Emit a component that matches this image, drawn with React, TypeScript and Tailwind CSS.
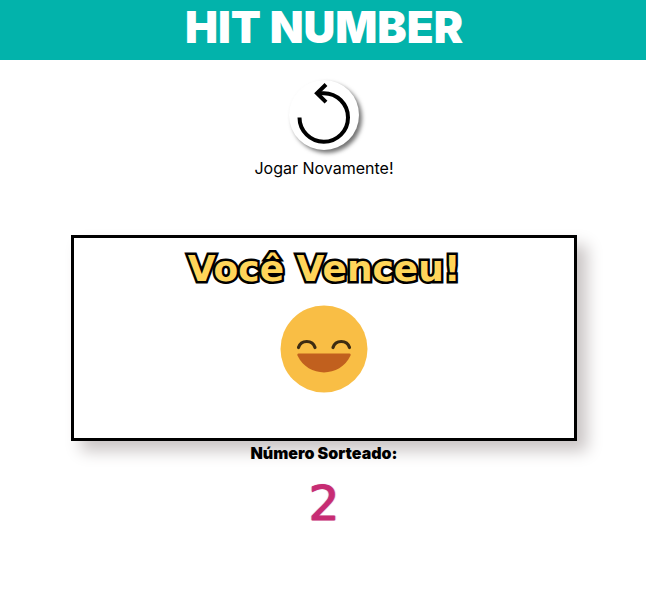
function Header() {
  return (
    <header className="flex h-[60px] items-center justify-center bg-[#02b3ab] pb-1.5 pl-0.5">
      <h1 className="text-[44px] leading-none font-black text-white">HIT NUMBER</h1>
    </header>
  );
}

function RestartButton() {
  return (
    <button type="button" className="flex cursor-pointer flex-col items-center gap-1.5">
      <span className="flex size-[70px] items-center justify-center rounded-full bg-white shadow-[3px_3px_4px_rgba(0,0,0,0.55)]">
        <svg viewBox="0 0 70 70" className="size-[70px]" fill="none" stroke="#000" strokeWidth="4" aria-hidden="true">
          <path d="M10.500 37.500A24.250 24.250 0 1 0 34.700 13.200H28.500" />
          <path d="M37 4.500L28 13.200l9 9" />
        </svg>
      </span>
      <span className="text-base">Jogar Novamente!</span>
    </button>
  );
}

function HappyFace() {
  return (
    <svg viewBox="0 0 88 88" className="size-[88px]" role="img" aria-label="Rosto feliz">
      <circle cx="44" cy="44" r="43.500" fill="#f9be45" />
      <g fill="none" stroke="#3d2c12" strokeWidth="3.200" strokeLinecap="round">
        <path d="M18.500 42.500C21 34.500 32.500 34.500 35 42.500" />
        <path d="M53 42.500C55.500 34.500 67 34.500 69.500 42.500" />
      </g>
      <path d="M18.500 48.500H69.500Q71.300 48.500 70.500 50.500C60 73 28 73 17.500 50.500Q16.700 48.500 18.500 48.500Z" fill="#c1601e" />
    </svg>
  );
}

export default function App() {
  return (
    <div className="bg-white font-['Inter',sans-serif] text-black">
      <Header />
      <main className="flex flex-col items-center pt-5 pr-4 pl-[18px]">
        <RestartButton />
        <section className="mt-[55px] flex min-h-[206px] w-full max-w-[506px] flex-col items-center gap-3 border-3 border-black bg-white pt-[7px] shadow-[10px_10px_15px_#cac5c5]">
          <h2 className="font-['DejaVu_Sans',sans-serif] text-[36px] leading-[48px] font-bold text-[#ffd55a] [-webkit-text-stroke:5px_black] [paint-order:stroke_fill]">
            Você Venceu!
          </h2>
          <HappyFace />
        </section>
        <p className="font-black">Número Sorteado:</p>
        <output className="mt-2 font-['DejaVu_Sans',sans-serif] text-5xl leading-[60px] text-[#c72c73] [-webkit-text-stroke:1px_#c72c73] [text-shadow:1px_0_1px_#c98bb8,-1px_0_1px_#c98bb8]">
          2
        </output>
      </main>
    </div>
  );
}
